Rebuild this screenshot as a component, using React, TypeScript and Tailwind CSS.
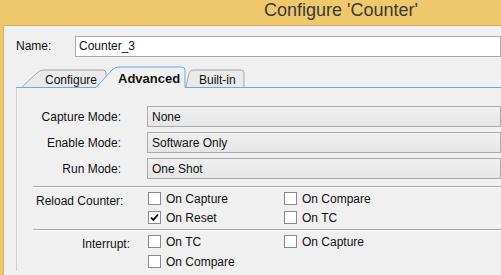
import React from "react";

const font = { fontFamily: '"Liberation Sans", Arial, sans-serif' };

function Box({ checked }: { checked?: boolean }) {
  return (
    <span className="w-[13px] h-[13px] border border-[#8a8a8a] bg-white flex items-center justify-center shrink-0">
      {checked && (
        <svg width="9" height="9" viewBox="0 0 9 9">
          <path d="M1 4.5 L3.3 7 L8 1.5" stroke="#000" strokeWidth="1.8" fill="none" />
        </svg>
      )}
    </span>
  );
}

function Check({ label, checked }: { label: string; checked?: boolean }) {
  return (
    <div className="flex items-center gap-[5px] h-[19px]">
      <Box checked={checked} />
      <span className="text-[12px] text-[#111] leading-none">{label}</span>
    </div>
  );
}

function Select({ value }: { value: string }) {
  return (
    <div className="flex-1 h-[21px] border border-[#acacac] bg-gradient-to-b from-[#f0f0f0] to-[#e5e5e5] flex items-center pl-[4px] text-[12px] text-[#111]">
      {value}
    </div>
  );
}

export default function App() {
  return (
    <div className="w-[501px] h-[275px] overflow-hidden bg-[#f0c86c] relative" style={font}>
      <div className="h-[25px] flex items-center pl-[264px] pb-[4px] text-[18px] text-[#3a3a3a]">Configure 'Counter'</div>
      <div className="absolute left-[3px] top-[25px] right-0 bottom-0 bg-[#f0f0f0] border-l border-t border-[#d6b060]">
        <div className="flex items-center h-[32px] mt-[4px]">
          <span className="w-[71px] pl-[12px] text-[12px] text-[#111]">Name:</span>
          <div className="flex-1 h-[21px] border border-[#ababab] bg-white flex items-center pl-[3px] text-[12px] text-[#111]">Counter_3</div>
        </div>
        {/* tabs */}
        <div className="relative h-[26px]">
          <svg className="absolute left-0 top-0" width="498" height="26">
            <path d="M18 25 L33 11 Q36 8 40 8 L99 8 Q102 8 102 11 L102 25" fill="#eaeaea" stroke="#a9a9a9" />
            <path d="M182 25 L185 11 Q186 8 190 8 L237 8 Q240 8 240 11 L240 25" fill="#eaeaea" stroke="#a9a9a9" />
            <path d="M92 25.5 L108 8 Q111 5 115 5 L178 5 Q181 5 181 8 L181 25.5" fill="#f0f0f0" stroke="#6fa8e3" />
            <line x1="12" y1="25.5" x2="92" y2="25.5" stroke="#6fa8e3" />
            <line x1="181" y1="25.5" x2="498" y2="25.5" stroke="#6fa8e3" />
          </svg>
          <span className="absolute left-[41px] top-[9px] text-[12px] text-[#111]">Configure</span>
          <span className="absolute left-[114px] top-[7px] text-[13px] font-bold text-[#111]">Advanced</span>
          <span className="absolute left-[195px] top-[9px] text-[12px] text-[#111]">Built-in</span>
        </div>
        <div className="ml-[12px] border-l border-[#d0d0d0] pl-[16px] pt-[18px]">
          <div className="flex flex-col gap-[5px]">
            {[
              ["Capture Mode:", "None"],
              ["Enable Mode:", "Software Only"],
              ["Run Mode:", "One Shot"],
            ].map(([l, v]) => (
              <div key={l} className="flex items-center">
                <span className="w-[88px] text-right text-[12px] text-[#111]">{l}</span>
                <span className="w-[26px]" />
                <Select value={v} />
              </div>
            ))}
          </div>
          <div className="mt-[7px] border-t border-[#a8a8a8] border-b-[1px] border-b-white h-[2px]" />
          <div className="flex pt-[2px]">
            <span className="w-[115px] pl-[3px] text-[12px] text-[#111] pt-[2px]">Reload Counter:</span>
            <div className="grid grid-cols-[136px_auto] -mt-[1px]">
              <Check label="On Capture" />
              <Check label="On Compare" />
              <Check label="On Reset" checked />
              <Check label="On TC" />
            </div>
          </div>
          <div className="mt-[2px] border-t border-[#a8a8a8] border-b-[1px] border-b-white h-[2px]" />
          <div className="flex pt-[1px]">
            <span className="w-[97px] text-right text-[12px] text-[#111] pt-[3px]">Interrupt:</span>
            <span className="w-[18px]" />
            <div className="grid grid-cols-[136px_auto] gap-y-[1px]">
              <Check label="On TC" />
              <Check label="On Capture" />
              <Check label="On Compare" />
            </div>
          </div>
        </div>
      </div>
    </div>
  );
}
